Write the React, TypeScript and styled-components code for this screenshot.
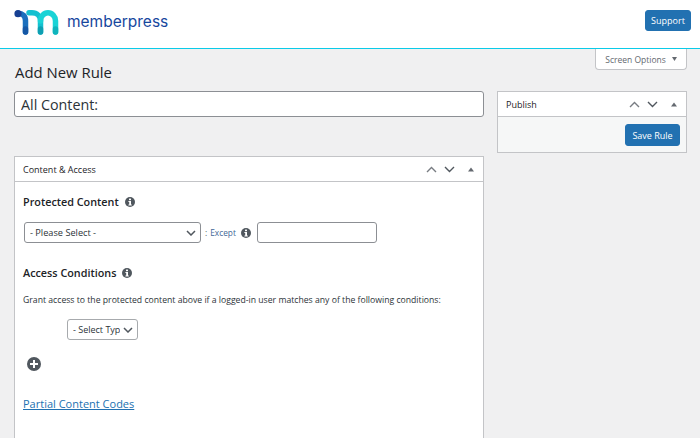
import React from 'react'
import styled, { createGlobalStyle } from 'styled-components'

const Global = createGlobalStyle`
  html, body { margin: 0; padding: 0; background: #f0f0f1; }
  body { font-family: "Open Sans", "Noto Sans", sans-serif; color: #1d2327; overflow: hidden; }
  * { box-sizing: border-box; }
`

const Page = styled.div`
  width: 700px;
  height: 438px;
  overflow: hidden;
  background: #f0f0f1;
`

const Header = styled.header`
  height: 49px;
  background: #fff;
  border-bottom: 1px solid #0bcbe8;
  display: flex;
  align-items: flex-start;
  justify-content: space-between;
  padding: 10px 9px 0 14px;
`

const Brand = styled.div`
  display: flex;
  align-items: center;
  gap: 7px;
  height: 25px;
`

const BrandName = styled.span`
  font-family: Inter, "Open Sans", sans-serif;
  font-size: 15.5px;
  font-weight: 400;
  color: #17479e;
  position: relative;
  top: -1px;
`

const Button = styled.button`
  height: 21px;
  width: 46px;
  padding: 0;
  background: #2271b1;
  border: 1px solid #2271b1;
  border-radius: 3px;
  color: #fff;
  font-family: inherit;
  font-size: 9px;
  line-height: 1;
`

const ScreenBar = styled.div`
  display: flex;
  justify-content: flex-end;
  padding-right: 13px;
  height: 21px;
`

const ScreenTab = styled.div`
  width: 92px;
  height: 21px;
  background: #fff;
  border: 1px solid #c3c4c7;
  border-top: 0;
  border-radius: 0 0 4px 4px;
  display: flex;
  align-items: center;
  justify-content: center;
  gap: 6px;
  font-size: 8.5px;
  color: #646970;
`

const Title = styled.h1`
  margin: -8px 0 0 15px;
  font-size: 14.9px;
  line-height: 20px;
  font-weight: 400;
  color: #1d2327;
`

const Columns = styled.div`
  display: grid;
  grid-template-columns: 470px 190px;
  column-gap: 13px;
  margin: 9px 0 0 14px;
  align-items: start;
`

const LeftColumn = styled.div`
  display: flex;
  flex-direction: column;
  gap: 39px;
`

const TitleInput = styled.input`
  width: 100%;
  height: 26px;
  padding: 0 6px;
  background: #fff;
  border: 1px solid #8c8f94;
  border-radius: 3px;
  font-family: inherit;
  font-size: 14.3px;
  color: #2c3338;
`

const Box = styled.section`
  background: #fff;
  border: 1px solid #c3c4c7;
`

const ContentBox = styled(Box)`
  height: 400px;
`

const BoxHead = styled.div`
  height: 25px;
  display: flex;
  align-items: center;
  justify-content: space-between;
  padding: 0 8px;
  border-bottom: 1px solid #c3c4c7;
`

const BoxTitle = styled.h2`
  margin: 0;
  font-size: 9px;
  font-weight: 500;
  color: #1d2327;
`

const HeadIcons = styled.div`
  display: flex;
  align-items: center;
  gap: 7px;
  margin-right: 1px;
`

const Arrow = styled.svg<{ $muted?: boolean }>`
  display: block;
  fill: none;
  stroke: ${p => (p.$muted ? '#787c82' : '#50575e')};
  stroke-width: 1.4;
`

const Caret = styled.svg`
  display: block;
  fill: #646970;
  margin-left: 6px;
`

const PublishFoot = styled.div`
  height: 35px;
  background: #f6f7f7;
  display: flex;
  align-items: flex-start;
  justify-content: flex-end;
  padding: 7px 6px 0 0;
`

const SaveButton = styled(Button)`
  height: 22px;
  width: 55px;
`

const BoxBody = styled.div`
  padding: 0 8px;
`

const SectionTitle = styled.h3`
  margin: 0;
  display: flex;
  align-items: center;
  gap: 6px;
  font-size: 10.8px;
  line-height: 16px;
  font-weight: 600;
  color: #1d2327;
`

const ProtectedTitle = styled(SectionTitle)`
  padding-top: 12px;
`

const RuleRow = styled.div`
  display: flex;
  align-items: center;
  margin: 12px 0 0 1px;
`

const Select = styled.select<{ $width: number }>`
  appearance: none;
  width: ${p => p.$width}px;
  background: #fff url("data:image/svg+xml,%3Csvg xmlns='http://www.w3.org/2000/svg' width='10' height='6'%3E%3Cpath d='M1 1l4 4 4-4' fill='none' stroke='%2350575e' stroke-width='1.5'/%3E%3C/svg%3E") no-repeat right 4px center;
  border: 1px solid #8c8f94;
  border-radius: 3px;
  font-family: inherit;
  color: #2c3338;
  font-size: 9.2px;
  height: 21px;
  padding: 0 16px 0 5px;
`

const Separator = styled.span`
  margin: 0 4px;
  font-size: 8.5px;
  color: #50575e;
`

const ExceptLabel = styled.span`
  font-size: 8.3px;
  color: #3f6796;
  margin: 0 5px 0 -1px;
`

const ExceptInput = styled.input`
  width: 120px;
  height: 21px;
  margin-left: 6px;
  border: 1px solid #8c8f94;
  border-radius: 3px;
  background: #fff;
`

const AccessTitle = styled(SectionTitle)`
  margin-top: 22px;
`

const Hint = styled.p`
  margin: 13px 0 0;
  font-size: 8.67px;
  line-height: 12px;
  font-weight: 400;
  color: #2c3338;
`

const TypeRow = styled.div`
  margin: 13px 0 0 44px;
`

const TypeSelect = styled(Select)`
  display: block;
  border-color: #a7aaad;
  padding-right: 17px;
  font-size: 9px;
`

const AddLink = styled.a`
  display: inline-block;
  margin: 17px 0 0 4px;
  color: #50575e;
  line-height: 0;
`

const CodesLink = styled.a`
  display: block;
  margin-top: 20px;
  font-size: 11px;
  line-height: 16px;
  font-weight: 500;
  color: #2271b1;
  text-decoration: underline;
`

const InfoSvg = styled.svg`
  display: block;
  flex: none;
`

function Info() {
  return (
    <InfoSvg width="10" height="10" viewBox="0 0 10 10">
      <circle cx="5" cy="5" r="5" fill="#50575e" />
      <rect x="4" y="1.6" width="2" height="1.6" fill="#fff" />
      <path d="M3.4 4h2.6v3.4h.8v1H3.4v-1h.8V5h-.8z" fill="#fff" />
    </InfoSvg>
  )
}

function HandleIcons() {
  return (
    <HeadIcons>
      <Arrow $muted width="11" height="7" viewBox="0 0 11 7">
        <path d="M1 6l4.500-4.500L10 6" />
      </Arrow>
      <Arrow width="11" height="7" viewBox="0 0 11 7">
        <path d="M1 1l4.500 4.500L10 1" />
      </Arrow>
      <Caret width="6" height="5" viewBox="0 0 6 5">
        <path d="M3 0.500L6 4.500H0z" />
      </Caret>
    </HeadIcons>
  )
}

function Logo() {
  return (
    <svg width="46" height="25" viewBox="0 0 46 25" fill="none" strokeWidth="5.5" strokeLinecap="round">
      <path d="M15 2.800h3c5 0 8.500 3.500 8.500 8V22" stroke="#14c0d0" />
      <path d="M26.500 11c0-4.500 3.500-8.200 7.500-8.200s7.500 3.700 7.500 8.200V22" stroke="#1ad3d6" />
      <path d="M26.500 19v3" stroke="#0e9fb2" />
      <path d="M41.500 19v3" stroke="#0fb4bc" />
      <path d="M4 3.200c4.500 0 7.500 2.800 7.500 7.800V22" stroke="#1a6fbd" />
      <path d="M11.500 19v3" stroke="#1557a5" />
      <circle cx="4" cy="3.700" r="3.600" fill="#173f92" stroke="none" />
    </svg>
  )
}

export default function App() {
  return (
    <Page>
      <Global />
      <Header>
        <Brand>
          <Logo />
          <BrandName>memberpress</BrandName>
        </Brand>
        <Button type="button">Support</Button>
      </Header>
      <ScreenBar>
        <ScreenTab>
          Screen Options
          <svg width="5" height="4" viewBox="0 0 5 4"><path d="M0 0h5L2.500 4z" fill="#646970" /></svg>
        </ScreenTab>
      </ScreenBar>
      <Title>Add New Rule</Title>
      <Columns>
        <LeftColumn>
          <TitleInput defaultValue="All Content:" />
          <ContentBox>
            <BoxHead>
              <BoxTitle>Content &amp; Access</BoxTitle>
              <HandleIcons />
            </BoxHead>
            <BoxBody>
              <ProtectedTitle>Protected Content <Info /></ProtectedTitle>
              <RuleRow>
                <Select $width={177}><option>- Please Select -</option></Select>
                <Separator>:</Separator>
                <ExceptLabel>Except</ExceptLabel>
                <Info />
                <ExceptInput />
              </RuleRow>
              <AccessTitle>Access Conditions <Info /></AccessTitle>
              <Hint>Grant access to the protected content above if a logged-in user matches any of the following conditions:</Hint>
              <TypeRow>
                <TypeSelect $width={71}><option>- Select Type -</option></TypeSelect>
              </TypeRow>
              <AddLink href="#">
                <svg width="14" height="14" viewBox="0 0 14 14">
                  <circle cx="7" cy="7" r="7" fill="currentColor" />
                  <path d="M6 3h2v3h3v2H8v3H6V8H3V6h3z" fill="#fff" />
                </svg>
              </AddLink>
              <CodesLink href="#">Partial Content Codes</CodesLink>
            </BoxBody>
          </ContentBox>
        </LeftColumn>
        <Box>
          <BoxHead>
            <BoxTitle>Publish</BoxTitle>
            <HandleIcons />
          </BoxHead>
          <PublishFoot>
            <SaveButton type="button">Save Rule</SaveButton>
          </PublishFoot>
        </Box>
      </Columns>
    </Page>
  )
}
